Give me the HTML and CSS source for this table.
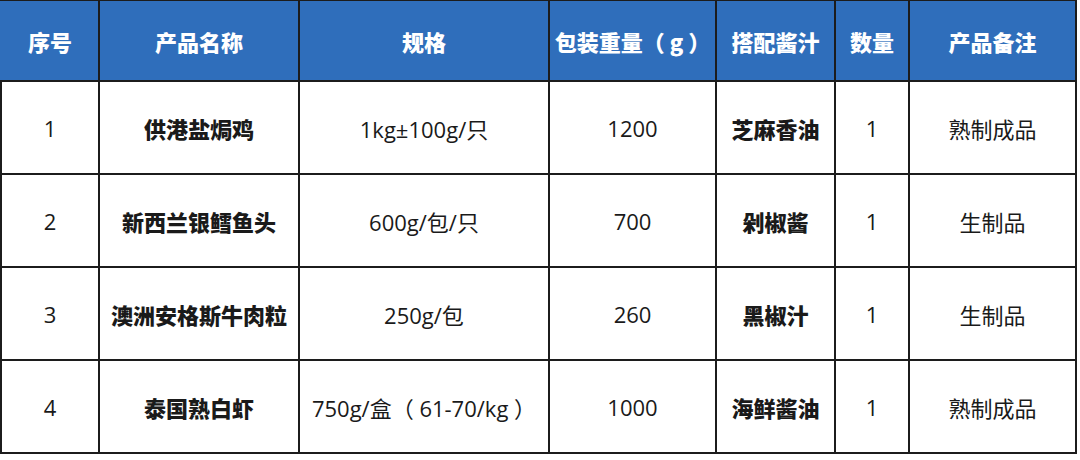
FILE: index.html
```html
<!DOCTYPE html>
<html lang="zh">
<head>
<meta charset="utf-8">
<title>产品表</title>
<link rel="stylesheet" href="styles.css">
</head>
<body>
<table class="sheet">
  <colgroup>
    <col class="c1"><col class="c2"><col class="c3"><col class="c4"><col class="c5"><col class="c6"><col class="c7">
  </colgroup>
  <thead>
    <tr>
      <th>序号</th><th>产品名称</th><th>规格</th><th>包装重量（ g ）</th><th>搭配酱汁</th><th>数量</th><th>产品备注</th>
    </tr>
  </thead>
  <tbody>
    <tr>
      <td>1</td><td class="b">供港盐焗鸡</td><td>1kg±100g/只</td><td>1200</td><td class="b">芝麻香油</td><td>1</td><td>熟制成品</td>
    </tr>
    <tr>
      <td>2</td><td class="b">新西兰银鳕鱼头</td><td>600g/包/只</td><td>700</td><td class="b">剁椒酱</td><td>1</td><td>生制品</td>
    </tr>
    <tr>
      <td>3</td><td class="b">澳洲安格斯牛肉粒</td><td>250g/包</td><td>260</td><td class="b">黑椒汁</td><td>1</td><td>生制品</td>
    </tr>
    <tr>
      <td>4</td><td class="b">泰国熟白虾</td><td>750g/盒（ 61-70/kg ）</td><td>1000</td><td class="b">海鲜酱油</td><td>1</td><td>熟制成品</td>
    </tr>
  </tbody>
</table>
</body>
</html>
```

FILE: styles.css
```css
html, body {
  margin: 0;
  padding: 0;
  background: #ffffff;
}
body {
  font-family: "Open Sans", "Noto Sans CJK SC", "Noto Sans", sans-serif;
  color: #1a1a1a;
}
.sheet {
  border-collapse: collapse;
  table-layout: fixed;
  width: 1075px;
  margin-left: 0;
  margin-top: -1px;
}
.c1 { width: 98px; }
.c2 { width: 200px; }
.c3 { width: 250px; }
.c4 { width: 167px; }
.c5 { width: 119px; }
.c6 { width: 74px; }
.c7 { width: 167px; }
.sheet th, .sheet td {
  border: 2px solid #1c1c1c;
  text-align: center;
  vertical-align: middle;
  padding: 0;
  white-space: nowrap;
  font-size: 22px;
}
.sheet th {
  background: #2f6ebb;
  color: #ffffff;
  font-weight: 800;
  height: 79px;
  font-family: "Noto Sans CJK SC", sans-serif;
}
.sheet thead th:first-child {
  border-left-color: #2f6ebb;
}
.sheet td {
  height: 91px;
  font-weight: 400;
  color: #1a1a1a;
}
.sheet td.b {
  font-weight: 800;
  font-family: "Noto Sans CJK SC", sans-serif;
}
```
